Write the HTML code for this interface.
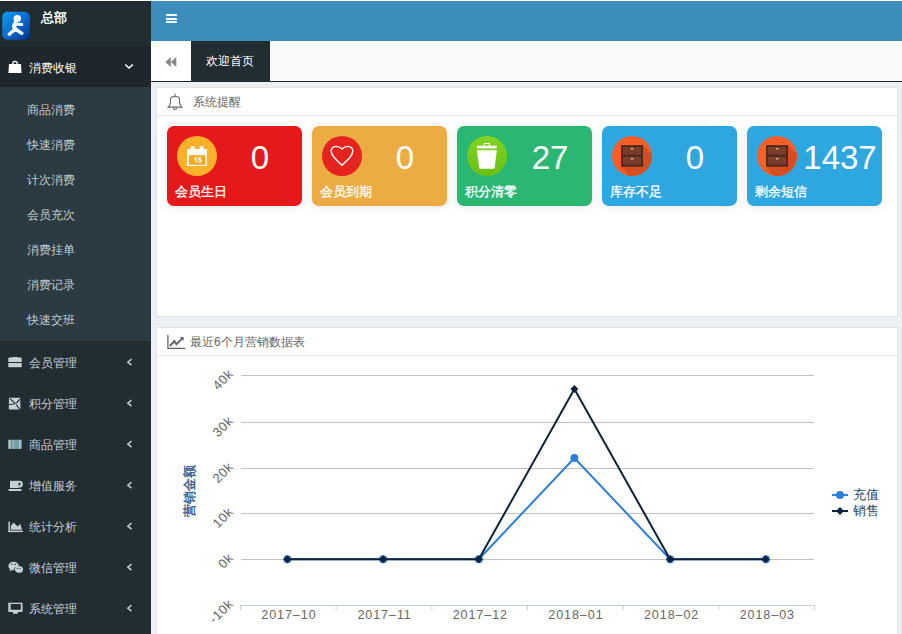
<!DOCTYPE html>
<html><head><meta charset="utf-8">
<style>
*{margin:0;padding:0;box-sizing:border-box}
html,body{width:902px;height:634px;overflow:hidden;background:#ecf0f5;font-family:"Liberation Sans",sans-serif;font-size:13px}
.abs{position:absolute}
#topline{left:0;top:0;width:902px;height:1px;background:#fff}
#side{left:0;top:1px;width:151px;height:633px;background:#222d32}
#logo{display:none}
#brand{left:41px;top:10px;color:#fff;font-weight:bold;font-size:13px;line-height:16px}
#act{left:0;top:46px;width:151px;height:41px;background:#1e282c}
#sub{left:0;top:87px;width:151px;height:254px;background:#2c3b41}
.mi{left:28.6px;color:#c3ced4;font-size:12px;line-height:16px;white-space:nowrap}
.si{left:27px;color:#bfcbd1;font-size:12px;line-height:16px;white-space:nowrap}
#header{left:151px;top:1px;width:751px;height:40px;background:#3c8dbc}
#tabs{left:151px;top:41px;width:751px;height:40px;background:#fafafa}
#backbtn{left:151px;top:41px;width:40px;height:40px;background:#fff}
#tabline{left:151px;top:81px;width:751px;height:1px;background:#1c2529}
#tab1{left:191px;top:41px;width:79px;height:41px;background:#222d32;color:#fff;font-size:12px;line-height:40px;text-align:center;text-indent:-2px}
.box{background:#fff;border:1px solid #e3e3e3}
.bhead{color:#666;font-size:12px;line-height:16px;white-space:nowrap}
.card{width:135px;height:80px;border-radius:7px;box-shadow:0 2px 10px rgba(0,0,0,.09)}
.circ{left:10px;top:10px;width:40px;height:40px;border-radius:50%;overflow:hidden}
.num{left:50.5px;top:14px;width:85px;text-align:center;color:#fff;font-size:33px;line-height:36px}
.lbl{left:8px;top:58px;color:#fff;font-size:13px;line-height:16px;white-space:nowrap;-webkit-text-stroke:0.3px #fff}
</style></head><body>
<div class="abs" id="topline"></div>
<div class="abs" id="side"></div>
<div class="abs" id="logo"></div>
<div class="abs" id="brand">总部</div>
<div class="abs" id="act"></div>
<div class="abs" id="sub"></div>
<div class="abs mi" style="top:59.7px;color:#fff">消费收银</div>
<div class="abs si" style="top:102px">商品消费</div>
<div class="abs si" style="top:137px">快速消费</div>
<div class="abs si" style="top:172px">计次消费</div>
<div class="abs si" style="top:207px">会员充次</div>
<div class="abs si" style="top:242px">消费挂单</div>
<div class="abs si" style="top:277px">消费记录</div>
<div class="abs si" style="top:312px">快速交班</div>
<div class="abs mi" style="top:355px">会员管理</div>
<div class="abs mi" style="top:396px">积分管理</div>
<div class="abs mi" style="top:437px">商品管理</div>
<div class="abs mi" style="top:478px">增值服务</div>
<div class="abs mi" style="top:519px">统计分析</div>
<div class="abs mi" style="top:560px">微信管理</div>
<div class="abs mi" style="top:601px">系统管理</div>

<div class="abs" id="header"></div>
<div class="abs" id="tabs"></div>
<div class="abs" id="backbtn"></div>
<div class="abs" id="tabline"></div>
<div class="abs" id="tab1">欢迎首页</div>

<div class="abs box" style="left:156px;top:87px;width:742px;height:230px"></div>
<div class="abs" style="left:157px;top:115px;width:740px;height:1px;background:#e8e8e8"></div>
<div class="abs bhead" style="left:193px;top:94px">系统提醒</div>

<div class="abs card" style="left:167px;top:126px;background:#e5191b">
  <div class="abs circ" style="background:#fbb02a"></div>
  <div class="abs num">0</div><div class="abs lbl">会员生日</div></div>
<div class="abs card" style="left:312px;top:126px;background:#ecac43">
  <div class="abs circ" style="background:#e5231f"></div>
  <div class="abs num">0</div><div class="abs lbl">会员到期</div></div>
<div class="abs card" style="left:457px;top:126px;background:#2bb673">
  <div class="abs circ" style="background:linear-gradient(#80d420,#6cc014)"></div>
  <div class="abs num">27</div><div class="abs lbl">积分清零</div></div>
<div class="abs card" style="left:602px;top:126px;background:#2ea7e0">
  <div class="abs circ" style="background:#fc5e28"></div>
  <div class="abs num">0</div><div class="abs lbl">库存不足</div></div>
<div class="abs card" style="left:747px;top:126px;background:#2ea7e0">
  <div class="abs circ" style="background:#fc5e28"></div>
  <div class="abs num">1437</div><div class="abs lbl">剩余短信</div></div>

<div class="abs box" style="left:156px;top:327px;width:742px;height:320px"></div>
<div class="abs" style="left:157px;top:355px;width:740px;height:1px;background:#e8e8e8"></div>
<div class="abs bhead" style="left:190px;top:334px">最近6个月营销数据表</div>

<!--CHART-->
<svg class="abs" style="left:0;top:0" width="902" height="634">
<path d="M241 375.5H814" stroke="#c0c0c0" stroke-width="1"/>
<path d="M241 422.5H814" stroke="#c0c0c0" stroke-width="1"/>
<path d="M241 468.5H814" stroke="#c0c0c0" stroke-width="1"/>
<path d="M241 513.5H814" stroke="#c0c0c0" stroke-width="1"/>
<path d="M241 559.5H814" stroke="#c0c0c0" stroke-width="1"/>
<path d="M240 605.5H814" stroke="#c0d0e0" stroke-width="1"/>
<path d="M240.5 605V610" stroke="#c0d0e0" stroke-width="1"/>
<path d="M336.2 605V610" stroke="#c0d0e0" stroke-width="1"/>
<path d="M431.8 605V610" stroke="#c0d0e0" stroke-width="1"/>
<path d="M527.5 605V610" stroke="#c0d0e0" stroke-width="1"/>
<path d="M623.2 605V610" stroke="#c0d0e0" stroke-width="1"/>
<path d="M718.8 605V610" stroke="#c0d0e0" stroke-width="1"/>
<path d="M814.5 605V610" stroke="#c0d0e0" stroke-width="1"/>
<polyline points="287.4,559.2 383.1,559.2 478.8,559.2 574.4,458.0 670.1,559.2 765.8,559.2" fill="none" stroke="#2f7ed8" stroke-width="2" stroke-linejoin="round"/>
<circle cx="287.4" cy="559.2" r="4" fill="#2f7ed8"/>
<circle cx="383.1" cy="559.2" r="4" fill="#2f7ed8"/>
<circle cx="478.8" cy="559.2" r="4" fill="#2f7ed8"/>
<circle cx="574.4" cy="458.0" r="4" fill="#2f7ed8"/>
<circle cx="670.1" cy="559.2" r="4" fill="#2f7ed8"/>
<circle cx="765.8" cy="559.2" r="4" fill="#2f7ed8"/>
<polyline points="287.4,559.2 383.1,559.2 478.8,559.2 574.4,389.0 670.1,559.2 765.8,559.2" fill="none" stroke="#0d233a" stroke-width="2" stroke-linejoin="round"/>
<path d="M287.4 555.2L291.4 559.2L287.4 563.2L283.4 559.2Z" fill="#0d233a"/>
<path d="M383.1 555.2L387.1 559.2L383.1 563.2L379.1 559.2Z" fill="#0d233a"/>
<path d="M478.8 555.2L482.8 559.2L478.8 563.2L474.8 559.2Z" fill="#0d233a"/>
<path d="M574.4 385.0L578.4 389.0L574.4 393.0L570.4 389.0Z" fill="#0d233a"/>
<path d="M670.1 555.2L674.1 559.2L670.1 563.2L666.1 559.2Z" fill="#0d233a"/>
<path d="M765.8 555.2L769.8 559.2L765.8 563.2L761.8 559.2Z" fill="#0d233a"/>
<text x="288.9" y="618.8" text-anchor="middle" font-size="12.5" fill="#666" letter-spacing="0.95">2017–10</text>
<text x="384.6" y="618.8" text-anchor="middle" font-size="12.5" fill="#666" letter-spacing="0.95">2017–11</text>
<text x="480.3" y="618.8" text-anchor="middle" font-size="12.5" fill="#666" letter-spacing="0.95">2017–12</text>
<text x="575.9" y="618.8" text-anchor="middle" font-size="12.5" fill="#666" letter-spacing="0.95">2018–01</text>
<text x="671.6" y="618.8" text-anchor="middle" font-size="12.5" fill="#666" letter-spacing="0.95">2018–02</text>
<text x="767.3" y="618.8" text-anchor="middle" font-size="12.5" fill="#666" letter-spacing="0.95">2018–03</text>
<text x="234.2" y="374.5" text-anchor="end" font-size="13" letter-spacing="0.7" fill="#666" transform="rotate(-45 234.2 374.5)">40k</text>
<text x="234.2" y="421.5" text-anchor="end" font-size="13" letter-spacing="0.7" fill="#666" transform="rotate(-45 234.2 421.5)">30k</text>
<text x="234.2" y="467.5" text-anchor="end" font-size="13" letter-spacing="0.7" fill="#666" transform="rotate(-45 234.2 467.5)">20k</text>
<text x="234.2" y="512.5" text-anchor="end" font-size="13" letter-spacing="0.7" fill="#666" transform="rotate(-45 234.2 512.5)">10k</text>
<text x="234.2" y="558.5" text-anchor="end" font-size="13" letter-spacing="0.7" fill="#666" transform="rotate(-45 234.2 558.5)">0k</text>
<text x="234.2" y="604.5" text-anchor="end" font-size="13" letter-spacing="0.7" fill="#666" transform="rotate(-45 234.2 604.5)">-10k</text>
<text x="193.6" y="491" text-anchor="middle" font-size="12.5" font-weight="bold" fill="#3f6894" transform="rotate(-90 193.6 491)">营销金额</text>
<path d="M832 495H848" stroke="#2f7ed8" stroke-width="2"/><circle cx="840" cy="495" r="4" fill="#2f7ed8"/>
<text x="852.5" y="499.3" font-size="12.5" fill="#234766">充值</text>
<path d="M832 511H848" stroke="#0d233a" stroke-width="2"/><path d="M840 507L844 511L840 515L836 511Z" fill="#0d233a"/>
<text x="852.5" y="515.3" font-size="12.5" fill="#234766">销售</text>
</svg>
<!--/CHART-->
<!--ICONS-->
<svg class="abs" style="left:0;top:0" width="902" height="634">
<defs>
<linearGradient id="lg" x1="0" y1="0" x2="1" y2="1"><stop offset="0" stop-color="#0aa0f8"/><stop offset="0.5" stop-color="#0a6cd2"/><stop offset="1" stop-color="#003088"/></linearGradient>
<linearGradient id="gg" x1="0" y1="0" x2="0" y2="1"><stop offset="0" stop-color="#80d41e"/><stop offset="1" stop-color="#66bb12"/></linearGradient>
<clipPath id="cp1"><circle cx="632" cy="156" r="20"/></clipPath>
<clipPath id="cp2"><circle cx="777" cy="156" r="20"/></clipPath>
</defs>
<!-- logo -->
<rect x="2.3" y="11.7" width="27.5" height="28" rx="5" fill="url(#lg)"/>
<circle cx="17.3" cy="18.6" r="3.7" fill="#fff"/>
<path d="M15 23.5Q13.2 27 15.6 29.6" stroke="#fff" stroke-width="4.2" fill="none" stroke-linecap="round"/>
<path d="M15.5 24L21.8 24.6" stroke="#fff" stroke-width="3" stroke-linecap="round"/>
<path d="M15.4 29L9.2 34.2M15.4 29L21.8 33.3" stroke="#fff" stroke-width="3.4" stroke-linecap="round"/>
<!-- bag -->
<path d="M9 64H21L21.6 73H8.4Z" fill="#fff"/>
<path d="M12.8 64.5V63.5A2.2 2.2 0 0 1 17.2 63.5V64.5" stroke="#fff" stroke-width="1.3" fill="none"/>
<!-- chevron down -->
<path d="M125.2 64.5L129 68L132.8 64.5" stroke="#fff" stroke-width="1.6" fill="none"/>
<!-- chevron left x7 -->
<g stroke="#b8c7ce" stroke-width="1.6" fill="none">
<path d="M131.5 359.2L127.9 362.2L131.5 365.2"/>
<path d="M131.5 400.2L127.9 403.2L131.5 406.2"/>
<path d="M131.5 441.2L127.9 444.2L131.5 447.2"/>
<path d="M131.5 482.2L127.9 485.2L131.5 488.2"/>
<path d="M131.5 523.2L127.9 526.2L131.5 529.2"/>
<path d="M131.5 564.2L127.9 567.2L131.5 570.2"/>
<path d="M131.5 605.2L127.9 608.2L131.5 611.2"/>
</g>
<!-- member (briefcase) -->
<g fill="#c5d0d6">
<path d="M8.3 358.5Q8.3 357.5 9.5 357.5H12.3V357H17.7V357.5H20.5Q21.7 357.5 21.7 358.5V362H8.3Z"/>
<rect x="8.3" y="363" width="13.4" height="4.2"/>
</g>
<!-- pinwheel -->
<g><path d="M9 397.8H20.4V409.5H8.8Z" fill="#c5d0d6"/>
<path d="M10 398.6L15.6 403.6M8.6 404.8L14.8 403.8M20.6 398.6L16.4 403M16 404.2L19.8 409.6" stroke="#222d32" stroke-width="1.1" fill="none"/></g>
<!-- barcode -->
<g>
<rect x="8" y="439.8" width="13.8" height="9" fill="#7d99a4"/>
<rect x="9" y="439.8" width="1.4" height="9" fill="#b9cbb4"/>
<rect x="12.6" y="439.8" width="1.8" height="9" fill="#8fb5c9"/>
<rect x="16" y="439.8" width="2" height="9" fill="#6fa592"/>
<rect x="19" y="439.8" width="1.6" height="9" fill="#9fd0e4"/>
</g>
<!-- coffee -->
<g fill="#c5d0d6">
<rect x="10" y="480.8" width="8.6" height="7.2"/>
<path d="M18.2 480.8H19.5A3.3 3.3 0 0 1 19.5 487.6H18.2V485.6H19.2A1.4 1.4 0 0 0 19.2 482.8H18.2Z"/>
<rect x="8.4" y="488.9" width="13.3" height="2" rx="1"/>
</g>
<!-- area chart -->
<g fill="#c5d0d6">
<rect x="8.4" y="521.6" width="1.5" height="10.4"/>
<rect x="8.4" y="530.6" width="14.5" height="1.5"/>
<path d="M10.8 529.7V526L13.6 522.4L17.5 526.4L20.3 523.9L22 529.7Z"/>
</g>
<!-- wechat -->
<g fill="#c5d0d6">
<ellipse cx="13.6" cy="566" rx="5.2" ry="4.3"/>
<path d="M10 569L9.6 571.2L12.3 570Z"/>
<ellipse cx="18.8" cy="569.3" rx="4.2" ry="3.4"/>
<path d="M21 572L22.4 573L21.9 571Z"/>
</g>
<g fill="#222d32"><circle cx="12" cy="564.3" r=".7"/><circle cx="15.2" cy="564.3" r=".7"/><circle cx="17.4" cy="568.4" r=".6"/><circle cx="20" cy="568.4" r=".6"/></g>
<path d="M15.2 567.2A4.3 3.6 0 0 0 16.5 572.5" stroke="#222d32" stroke-width=".8" fill="none"/>
<!-- monitor -->
<g fill="#c5d0d6">
<path d="M8.3 602.8H22.5V612H8.3ZM10.6 604.1V609.8H20.8V604.1Z" fill-rule="evenodd"/>
<rect x="12.9" y="612" width="4.9" height="1.8"/>
</g>
<!-- hamburger -->
<g fill="#fff"><rect x="166" y="14" width="10.8" height="2"/><rect x="166" y="18" width="10.8" height="2"/><rect x="166" y="21" width="10.8" height="2"/></g>
<!-- back arrows -->
<path d="M165.3 61.9L170.8 56.9V66.9ZM170.8 61.9L176.3 56.9V66.9Z" fill="#888"/>
<!-- bell -->
<g stroke="#666" stroke-width="1.1" fill="none">
<path d="M175 93.8V96.4"/>
<path d="M172.2 96.7H177.8Q179.4 96.9 179.5 99.6V102.4Q179.7 105.4 181.8 107.1H168.2Q170.3 105.4 170.5 102.4V99.6Q170.6 96.9 172.2 96.7Z"/>
<path d="M173.4 107.9A1.6 1.6 0 0 0 176.6 107.9"/>
</g>
<!-- line chart icon -->
<g fill="none" stroke="#666">
<path d="M167.9 335V348.3H185.3" stroke-width="1.3"/>
<path d="M169.8 346L174.4 341.2L176.4 344.2L182 338.6" stroke-width="2"/>
</g>
<path d="M179.7 337.1H183.6V341Z" fill="#666"/>
<!-- calendar -->
<g>
<path d="M187.1 149H190.8V146.2H194.6V149H199.6V146.2H203.5V149H206.9V166H187.1Z" fill="#fff"/>
<rect x="188.9" y="155.2" width="16.6" height="9.6" fill="#f6a91e"/>
<path d="M194 158.5L195.5 157.2H196.7V162.6H195.4V158.9L194.5 159.5Z" fill="#fff"/><path d="M198.1 157.2H201.3V158.3H199.1L199 159.3Q199.5 159 200 159Q201.6 159.1 201.6 160.8Q201.5 162.7 199.7 162.7Q198.1 162.7 197.8 161.3L198.9 161.1Q199.1 161.7 199.7 161.7Q200.4 161.6 200.4 160.8Q200.4 160 199.7 160Q199.2 160 198.9 160.4H197.9Z" fill="#fff"/>
</g>
<!-- heart -->
<path d="M342 149Q339.5 146.4 336.3 146.4Q331.2 146.6 331.2 151.4Q331.4 154.8 335 158.4L342 165.2L349 158.4Q352.6 154.8 352.8 151.4Q352.8 146.6 347.7 146.4Q344.5 146.4 342 149Z" stroke="#fff" stroke-width="1.4" fill="none"/>
<!-- trash -->
<g fill="#fff">
<rect x="476.8" y="145.8" width="20.1" height="2.8" rx="1.4"/>
<path d="M483.8 146V143.8Q483.8 143 484.6 143H489.2Q490 143 490 143.8V146H488.9V144.1H484.9V146Z"/>
<path d="M476.8 150.3H496.9L494.5 168.7H479.4Z"/>
</g>
<!-- drawers x2 -->
<g clip-path="url(#cp1)">
<path d="M643 145.1L670 172V190H640L621.1 166.6Z" fill="#d64e1f"/>
<rect x="621.1" y="145.1" width="21.9" height="21.5" fill="#4b2620"/>
<rect x="622.8" y="146.8" width="18.5" height="7.8" fill="#7a3d29"/>
<rect x="622.8" y="156.6" width="18.5" height="8.3" fill="#7a3d29"/>
<rect x="630.8" y="148.1" width="2.6" height="1.3" fill="#e7c38a"/>
<rect x="630.8" y="158.1" width="2.6" height="1.3" fill="#e7c38a"/>
</g>
<g clip-path="url(#cp2)">
<path d="M788 145.1L815 172V190H785L766.1 166.6Z" fill="#d64e1f"/>
<rect x="766.1" y="145.1" width="21.9" height="21.5" fill="#4b2620"/>
<rect x="767.8" y="146.8" width="18.5" height="7.8" fill="#7a3d29"/>
<rect x="767.8" y="156.6" width="18.5" height="8.3" fill="#7a3d29"/>
<rect x="775.8" y="148.1" width="2.6" height="1.3" fill="#e7c38a"/>
<rect x="775.8" y="158.1" width="2.6" height="1.3" fill="#e7c38a"/>
</g>
</svg>
<!--/ICONS-->
</body></html>
